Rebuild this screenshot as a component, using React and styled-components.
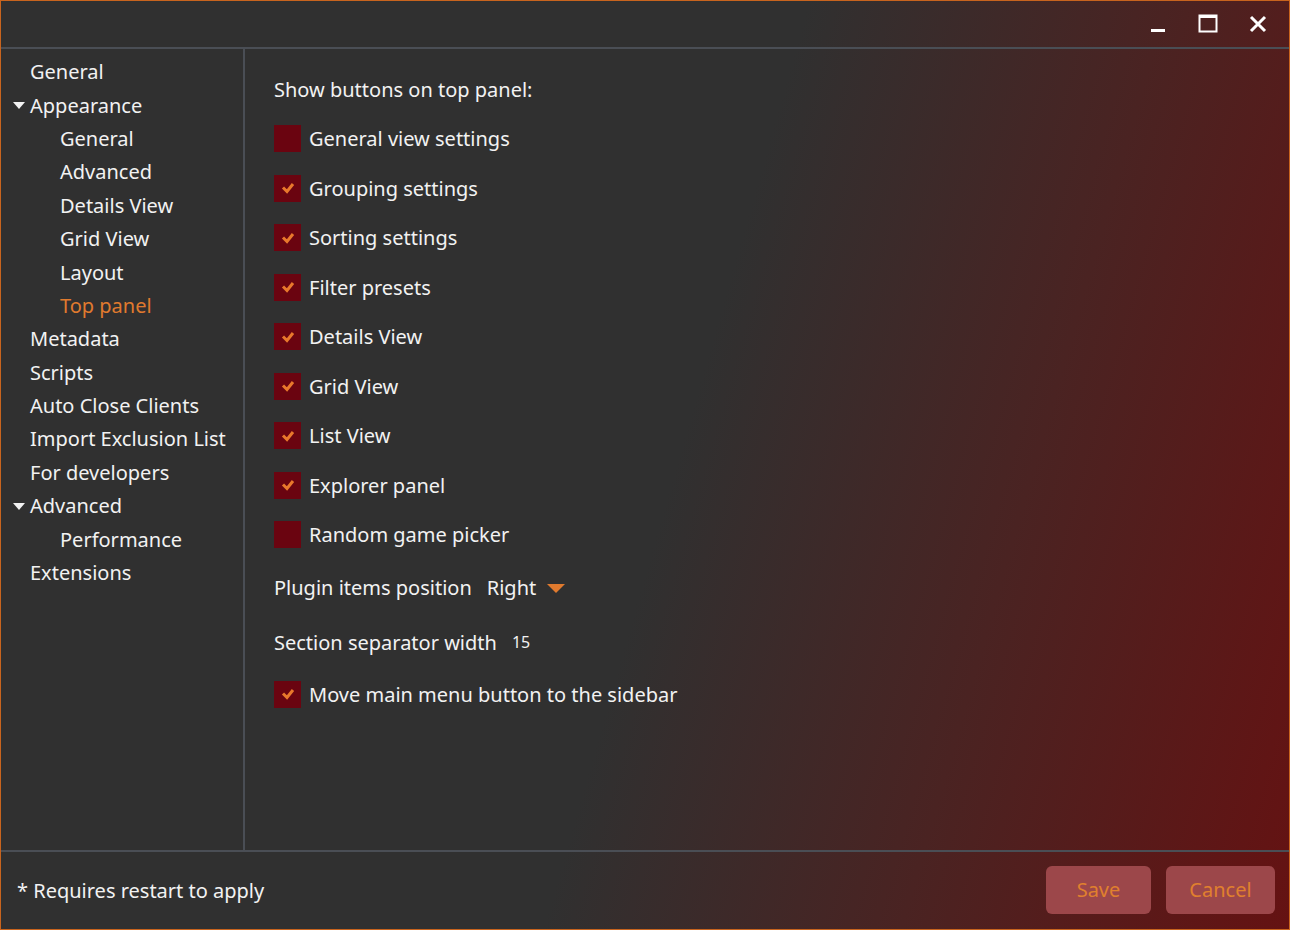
import styled, { createGlobalStyle } from 'styled-components'

const GlobalStyle = createGlobalStyle`
  html, body {
    margin: 0;
    padding: 0;
    background: #2f2f2f;
  }
`

const Window = styled.div`
  box-sizing: border-box;
  width: 1290px;
  height: 930px;
  border: 1px solid #c8641e;
  display: flex;
  flex-direction: column;
  font-family: 'Noto Sans', 'Open Sans', sans-serif;
  color: #f2f2f2;
  background: linear-gradient(106deg, #303030 0%, #303030 52%, #4a2322 75%, #651212 100%);
  overflow: hidden;
`

const TitleBar = styled.div`
  height: 46px;
  display: flex;
  justify-content: flex-end;
  align-items: center;
  gap: 22px;
  padding-right: 17px;
  border-bottom: 2px solid #4a4e55;
`

const WinButton = styled.button`
  width: 28px;
  height: 28px;
  background: none;
  border: none;
  padding: 0;
  display: flex;
  align-items: center;
  justify-content: center;
  color: #ffffff;
`

const Body = styled.div`
  flex: 1;
  display: flex;
  min-height: 0;
  border-bottom: 2px solid #4a4e55;
`

const Sidebar = styled.div`
  width: 242px;
  border-right: 2px solid #4a4e55;
  padding-top: 6px;
  display: flex;
  flex-direction: column;
`

const NavItem = styled.div`
  height: 33.4px;
  display: flex;
  align-items: center;
  padding-left: ${(p) => (p.level === 2 ? 59 : 29)}px;
  font-size: 20px;
  color: ${(p) => (p.active ? '#e07a2e' : '#f2f2f2')};
  position: relative;
`

const Arrow = styled.span`
  position: absolute;
  left: 12px;
  top: 50%;
  margin-top: -3px;
  width: 0;
  height: 0;
  border-left: 6px solid transparent;
  border-right: 6px solid transparent;
  border-top: 7px solid #f2f2f2;
`

const Content = styled.div`
  flex: 1;
  padding: 25px 0 0 29px;
  display: flex;
  flex-direction: column;
`

const Heading = styled.div`
  font-size: 20px;
  height: 30px;
  display: flex;
  align-items: center;
  margin-bottom: 10px;
`

const CheckRow = styled.div`
  height: 49.5px;
  display: flex;
  align-items: center;
  gap: 8px;
  font-size: 20px;
`

const Box = styled.span`
  width: 27px;
  height: 27px;
  background: #6a0410;
  display: flex;
  align-items: center;
  justify-content: center;
`

const SettingRow = styled.div`
  height: 55px;
  display: flex;
  align-items: center;
  gap: 15px;
  font-size: 20px;
`

const Select = styled.span`
  display: flex;
  align-items: center;
  gap: 11px;
`

const Caret = styled.span`
  width: 0;
  height: 0;
  border-left: 9px solid transparent;
  border-right: 9px solid transparent;
  border-top: 9px solid #e07a2e;
  margin-top: 2px;
`

const Number = styled.span`
  font-size: 16px;
`

const Footer = styled.div`
  height: 77px;
  display: flex;
  align-items: center;
  justify-content: space-between;
  padding: 0 14px 0 16px;
`

const Note = styled.div`
  font-size: 20px;
`

const Buttons = styled.div`
  display: flex;
  gap: 15px;
  margin-top: -2px;
`

const Button = styled.button`
  width: ${(p) => p.w}px;
  height: 48px;
  border: none;
  border-radius: 6px;
  background: #9c474a;
  color: #e0802e;
  font-family: 'Noto Sans', 'Open Sans', sans-serif;
  font-size: 20px;
`

const Check = () => (
  <svg width="14" height="12" viewBox="0 0 14 12">
    <path d="M2 5.5 L6 9.5 L12 2" fill="none" stroke="#e8782c" strokeWidth="3" />
  </svg>
)

const nav = [
  { label: 'General', level: 1 },
  { label: 'Appearance', level: 1, open: true },
  { label: 'General', level: 2 },
  { label: 'Advanced', level: 2 },
  { label: 'Details View', level: 2 },
  { label: 'Grid View', level: 2 },
  { label: 'Layout', level: 2 },
  { label: 'Top panel', level: 2, active: true },
  { label: 'Metadata', level: 1 },
  { label: 'Scripts', level: 1 },
  { label: 'Auto Close Clients', level: 1 },
  { label: 'Import Exclusion List', level: 1 },
  { label: 'For developers', level: 1 },
  { label: 'Advanced', level: 1, open: true },
  { label: 'Performance', level: 2 },
  { label: 'Extensions', level: 1 },
]

const checks = [
  ['General view settings', false],
  ['Grouping settings', true],
  ['Sorting settings', true],
  ['Filter presets', true],
  ['Details View', true],
  ['Grid View', true],
  ['List View', true],
  ['Explorer panel', true],
  ['Random game picker', false],
]

const App = () => {
  return (
    <Window>
      <GlobalStyle />
      <TitleBar>
        <WinButton>
          <svg width="16" height="20" viewBox="0 0 16 20">
            <rect x="1" y="15" width="14" height="3" fill="#fff" />
          </svg>
        </WinButton>
        <WinButton>
          <svg width="20" height="20" viewBox="0 0 20 20">
            <rect x="1.5" y="1.5" width="17" height="16" fill="none" stroke="#fff" strokeWidth="2" />
            <rect x="1" y="1" width="18" height="3" fill="#fff" />
          </svg>
        </WinButton>
        <WinButton>
          <svg width="20" height="20" viewBox="0 0 20 20">
            <path d="M3 3 L17 17 M17 3 L3 17" stroke="#fff" strokeWidth="3" />
          </svg>
        </WinButton>
      </TitleBar>
      <Body>
        <Sidebar>
          {nav.map((n, i) => (
            <NavItem key={i} level={n.level} active={n.active}>
              {n.open && <Arrow />}
              {n.label}
            </NavItem>
          ))}
        </Sidebar>
        <Content>
          <Heading>Show buttons on top panel:</Heading>
          {checks.map(([label, on]) => (
            <CheckRow key={label}>
              <Box>{on && <Check />}</Box>
              {label}
            </CheckRow>
          ))}
          <SettingRow>
            Plugin items position
            <Select>
              Right
              <Caret />
            </Select>
          </SettingRow>
          <SettingRow>
            Section separator width
            <Number>15</Number>
          </SettingRow>
          <CheckRow>
            <Box>
              <Check />
            </Box>
            Move main menu button to the sidebar
          </CheckRow>
        </Content>
      </Body>
      <Footer>
        <Note>* Requires restart to apply</Note>
        <Buttons>
          <Button w={105}>Save</Button>
          <Button w={109}>Cancel</Button>
        </Buttons>
      </Footer>
    </Window>
  )
}

export default App
